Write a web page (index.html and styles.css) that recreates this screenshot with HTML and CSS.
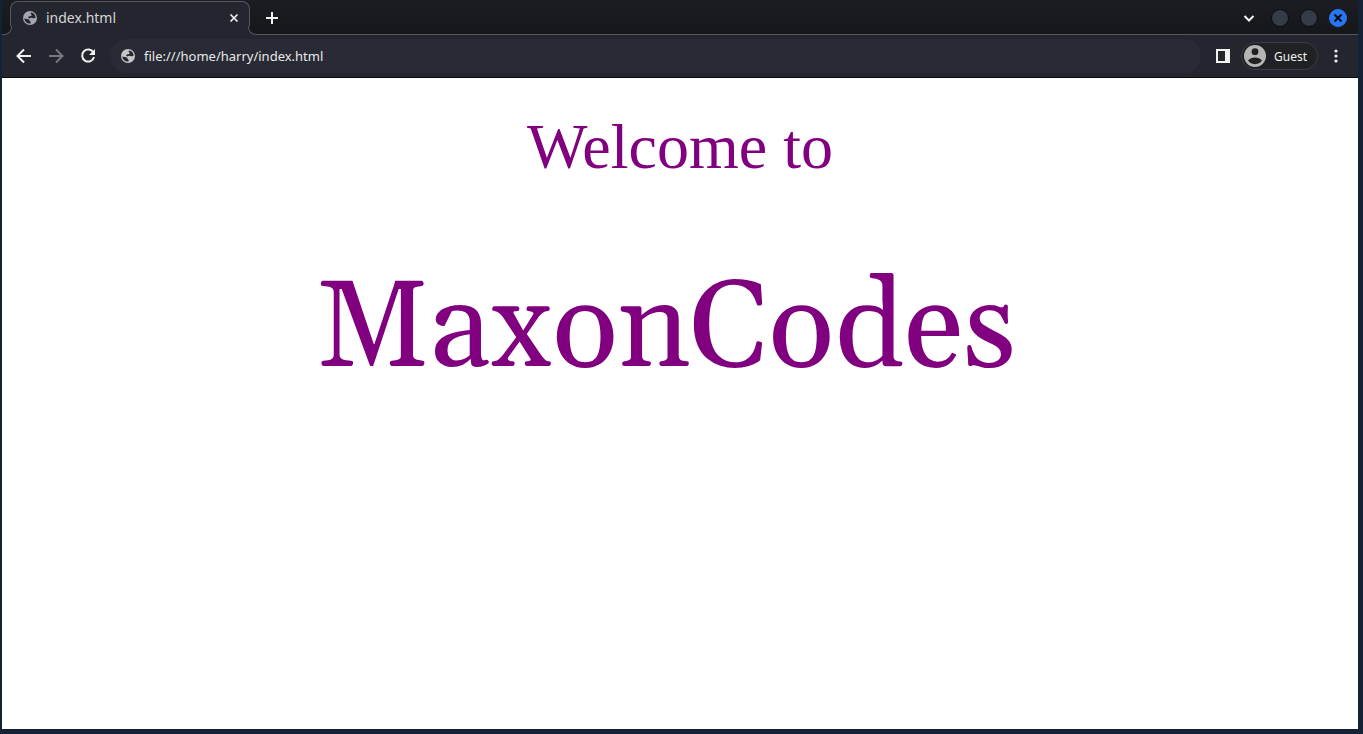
FILE: index.html
```html
<!DOCTYPE html>
<html lang="en">
<head>
<meta charset="utf-8">
<title>index.html</title>
<link rel="stylesheet" href="styles.css">
</head>
<body>
<svg class="defs" aria-hidden="true">
  <symbol id="globe" viewBox="0 0 14 14">
    <circle cx="7" cy="7" r="7" fill="currentColor"/>
    <path class="sea" d="M8 1.5C10.6 1.8 12.4 3.8 12.6 6.4 11.6 7.4 10.4 7.6 9.4 7 8.6 6.4 7.6 6.6 6.4 7.4L5 6.6C5.4 5.4 6.2 5.2 7.2 5.2 8.4 5.2 8.8 4.6 8.6 3.8L7.6 2.8Z"/>
    <path class="sea" d="M1.4 7.2C2.6 8 3.8 8 5 8.2 6.4 8.4 6.6 9.2 6.6 10 7.4 10.2 7.8 10.8 7.6 12.6 4 12.8 1.4 10.4 1.4 7.2Z"/>
  </symbol>
</svg>
<header class="browser">
  <div class="tab-strip">
    <div class="tab">
      <svg class="globe tab-globe" aria-hidden="true"><use href="#globe"/></svg>
      <span class="tab-title">index.html</span>
      <button class="tab-close" aria-label="Close tab"><svg width="10" height="10" viewBox="0 0 10 10"><path d="M1.5 1.5 8.5 8.5M8.5 1.5 1.5 8.5"/></svg></button>
    </div>
    <button class="new-tab" aria-label="New tab"><svg width="12" height="12" viewBox="0 0 12 12"><path d="M6 0V12M0 6H12"/></svg></button>
    <div class="window-controls">
      <button class="search-tabs" aria-label="Search tabs"><svg width="12" height="12" viewBox="0 0 12 12"><path d="M1.5 4 6 8.5 10.5 4"/></svg></button>
      <button class="dot" aria-label="Minimize"></button>
      <button class="dot" aria-label="Maximize"></button>
      <button class="dot dot-close" aria-label="Close window"><svg width="10" height="10" viewBox="0 0 10 10"><path d="M1.5 1.5 8.5 8.5M8.5 1.5 1.5 8.5"/></svg></button>
    </div>
  </div>
  <nav class="toolbar" aria-label="Browser toolbar">
    <button class="nav-button" aria-label="Back"><svg width="16" height="16" viewBox="0 0 16 16"><path d="M15 8H2M8 1.5 1.5 8 8 14.5"/></svg></button>
    <button class="nav-button forward" aria-label="Forward"><svg width="16" height="16" viewBox="0 0 16 16"><path d="M1 8H14M8 1.5 14.5 8 8 14.5"/></svg></button>
    <button class="nav-button" aria-label="Reload"><svg width="16" height="16" viewBox="0 0 16 16"><path d="M13.4 4.6A6 6 0 1 0 14 9"/><path class="solid" d="M15 1V7H9Z"/></svg></button>
    <div class="address">
      <svg class="globe" aria-hidden="true"><use href="#globe"/></svg>
      <input class="address-input" type="text" aria-label="Address" value="file:///home/harry/index.html" spellcheck="false">
    </div>
    <button class="panel-button" aria-label="Side panel"><svg width="14" height="14" viewBox="0 0 14 14"><path class="solid" fill-rule="evenodd" d="M0 0H14V14H0ZM2 2V12H9V2Z"/></svg></button>
    <button class="profile">
      <svg width="22" height="22" viewBox="0 0 22 22" aria-hidden="true"><circle cx="11" cy="11" r="11" fill="#b5b5b4"/><circle cx="11" cy="6.7" r="3.4" fill="#202124"/><path class="shoulders" d="M4 15.6C5.3 13.3 8.5 12.5 11 12.5S16.7 13.3 18 15.6C16.5 17.9 14 19.2 11 19.2S5.5 17.9 4 15.6Z"/></svg>
      Guest
    </button>
    <button class="menu" aria-label="Menu"><svg width="4" height="14" viewBox="0 0 4 14"><circle cx="2" cy="2" r="1.6"/><circle cx="2" cy="7" r="1.6"/><circle cx="2" cy="12" r="1.6"/></svg></button>
  </nav>
</header>
<main class="page">
  <p class="welcome">Welcome to</p>
  <h1 class="brand">MaxonCodes</h1>
</main>
</body>
</html>
```
FILE: styles.css
```css
* { box-sizing: border-box; }

body {
  margin: 0;
  min-height: 100vh;
  display: flex;
  flex-direction: column;
  padding: 0 5px 5px 2px;
  background: #152134;
  font-family: "Noto Sans", sans-serif;
}

.defs { position: absolute; width: 0; height: 0; }

button {
  display: flex;
  align-items: center;
  justify-content: center;
  flex: none;
  margin: 0;
  padding: 0;
  border: 0;
  background: none;
  color: #f1f1ef;
  font-family: inherit;
}

button path { fill: none; stroke: currentColor; stroke-width: 2; }
button path.solid { fill: currentColor; stroke: none; }
button path.shoulders { fill: #202124; stroke: none; }
.sea { fill: #24262f; }
.globe { width: 14px; height: 14px; flex: none; color: #c6c6c5; }

.browser { border-bottom: 1px solid #08090c; background: #24262f; }

.tab-strip {
  display: flex;
  height: 35px;
  padding: 1px 11px 0 8px;
  border-bottom: 1px solid #555660;
  background: linear-gradient(#1c1d22, #15171b);
}

.tab {
  position: relative;
  display: flex;
  align-items: center;
  width: 240px;
  height: 34px;
  padding: 0 10px 1px 12px;
  border: 1px solid #555660;
  border-bottom: 0;
  border-radius: 8px 8px 0 0;
  background: #24262f;
}

/* Curved feet that join the tab to the toolbar */
.tab::before,
.tab::after {
  content: "";
  position: absolute;
  bottom: 0;
  width: 9px;
  height: 8px;
  border: solid #555660;
}

.tab::before {
  left: -9px;
  border-width: 0 1px 1px 0;
  border-radius: 0 0 8px 0;
  background: #16181c;
  box-shadow: 2px 2px 0 #24262f;
}

.tab::after {
  right: -9px;
  border-width: 0 0 1px 1px;
  border-radius: 0 0 0 8px;
  background: #16181c;
  box-shadow: -2px 2px 0 #24262f;
}

.tab-globe { color: #a4a7b1; }
.tab-title { flex: 1; margin-left: 9px; color: #d5d5d4; font-size: 14px; line-height: 18px; }
.tab-close { width: 10px; height: 16px; }
.tab-close path { stroke-width: 1.7; }
.new-tab { width: 28px; margin-left: 8px; }

.window-controls { display: flex; align-items: center; gap: 11px; margin-left: auto; }
.search-tabs { width: 18px; height: 18px; margin-right: 2px; }

.dot {
  width: 18px;
  height: 18px;
  border: 1px solid #090b0e;
  border-radius: 50%;
  background: #363b48;
}

.dot-close { border-color: #2777f5; background: #2777f5; color: #090c12; }
.dot-close path { stroke-width: 2.2; }

.toolbar { display: flex; align-items: center; height: 42px; padding: 0 20px 0 14px; }
.nav-button { width: 16px; height: 28px; margin-right: 16px; }
.forward { color: #77787b; }

.address {
  flex: 1;
  display: flex;
  align-items: center;
  height: 34px;
  margin-left: -2px;
  padding: 0 11px;
  border-radius: 17px;
  background: #282a35;
}

.address-input {
  flex: 1;
  min-width: 0;
  height: 20px;
  margin-left: 9px;
  padding: 0;
  border: 0;
  outline: 0;
  background: none;
  color: #e8e8e6;
  font: 13px/20px "Noto Sans", sans-serif;
}

.panel-button { width: 14px; height: 28px; margin: 0 11px 0 15px; }

.profile {
  gap: 8px;
  height: 28px;
  padding: 0 10px 0 2px;
  border: 1px solid #3c3d40;
  border-radius: 14px;
  background: #202124;
  font-size: 12px;
}

.menu { width: 4px; height: 28px; margin-left: 16px; }
.menu circle { fill: currentColor; }

.page { flex: 1; background: #fff; color: #800080; text-align: center; }
.welcome { margin: 32px 0 0; font: 64px/74px "Liberation Serif", serif; }

.brand {
  margin: 72px 28px 0 0;
  font: 400 122px/150px Gelasio, Georgia, "Liberation Serif", serif;
}
```
